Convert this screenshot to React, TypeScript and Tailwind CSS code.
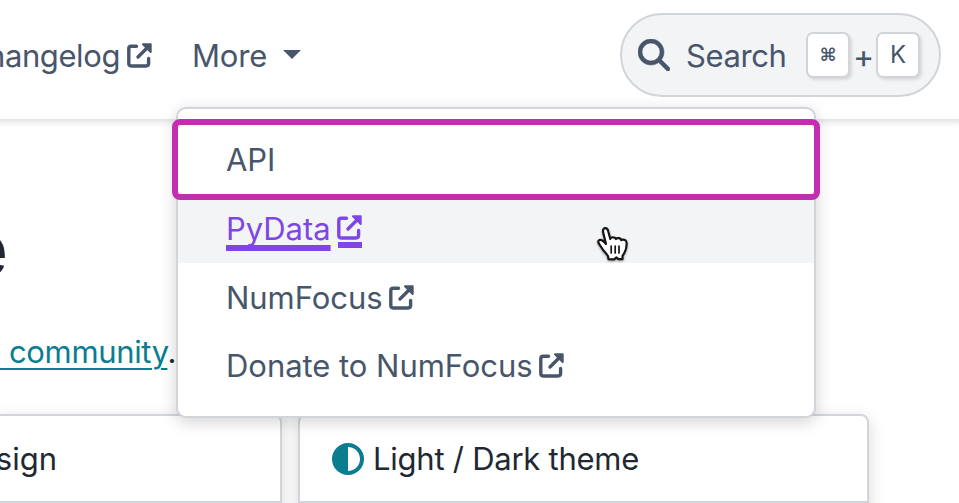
import { FaCircleHalfStroke, FaMagnifyingGlass } from "react-icons/fa6";

function ExternalIcon({ className = "" }: { className?: string }) {
  return (
    <svg className={`size-[25px] shrink-0 ${className}`} viewBox="0 0 25 25" fill="none" stroke="currentColor" strokeWidth="3.400" strokeLinecap="round">
      <path d="M9.500 3.300 H4.200 Q1.800 3.300 1.800 5.700 V20.600 Q1.800 23 4.200 23 H19 Q21.600 23 21.600 20.600 V15.500" />
      <path d="M11 14 L20 5" />
      <path d="M16 1.300 H23.700 V9 Z" fill="currentColor" strokeWidth="2" strokeLinejoin="round" />
    </svg>
  );
}

function Cursor() {
  return (
    <svg
      className="absolute left-[594px] top-[224px] h-[42px] w-[38px] drop-shadow-[0_1px_1px_rgba(0,0,0,0.4)]"
      viewBox="0 0 38 42"
      fill="#fff"
      stroke="#151515"
      strokeWidth="2.200"
      strokeLinejoin="round"
      strokeLinecap="round"
    >
      <path d="M12 20 L9.300 9 Q8.300 4.500 11 4.200 Q13.500 4 14.300 7.500 L16.300 15 Q17 13 19.300 13.300 Q21.300 13.500 21.800 15 Q23 13.800 25 14.200 Q27 14.600 27.300 16.200 Q29 15 31 16 Q33 17 32.600 20.500 Q32.500 25 30.300 29 L28.500 32 L28.500 35.200 L24.500 35.200 L22.500 33.500 L20 35.400 L14.500 35.200 L14 32 Q12 29 9.500 26.500 L5.500 20.500 Q3.300 17.500 5 16.300 Q7.500 14.800 12 20 Z" />
      <path d="M17.200 22 V29 M21.200 22 V29 M25 22 V29" strokeWidth="1.700" />
    </svg>
  );
}

function Key({ children, className }: { children: string; className: string }) {
  return (
    <kbd
      className={`flex h-[46px] w-11 items-center justify-center rounded-[7px] border-2 border-[#d1d5da] bg-white font-['Inter','DejaVu_Sans',sans-serif] shadow-[2px_2px_3px_#d8d8d8] ${className}`}
    >
      {children}
    </kbd>
  );
}

const links = ["NumFocus", "Donate to NumFocus"];

function Menu() {
  return (
    <div className="absolute left-[176px] top-[107px] z-20 h-[311px] w-[640px] rounded-[10px] border-2 border-[#d1d5da] bg-white py-4 tracking-[-0.04px] shadow-[0_4px_16px_rgba(0,0,0,0.18)]">
      <a className="relative z-10 flex h-[69px] items-center rounded-[2px] bg-white pl-12 outline-6 outline-[#c12eb0]">
        <span>API</span>
      </a>
      <a className="flex h-[69px] items-center bg-[#f3f4f5] pl-12 text-[#8045e5]">
        <span className="underline decoration-[6px] underline-offset-[5px] [text-decoration-skip-ink:none]">
          PyData
        </span>
        <span className="ml-[7px] mt-[5px] flex h-[33px] flex-col justify-between">
          <ExternalIcon className="-ml-px" />
          <span className="h-1.5 w-6 bg-[#8045e5]" />
        </span>
      </a>
      {links.map((label) => (
        <a key={label} className="flex h-[68.500px] items-center pl-12 pt-px">
          <span>{label}</span>
          <ExternalIcon className="mb-px ml-1.5" />
        </a>
      ))}
    </div>
  );
}

export default function App() {
  return (
    <div className="relative flex h-[503px] w-[959px] flex-col overflow-hidden whitespace-nowrap bg-white font-['Inter',sans-serif] text-[31px] font-[440] leading-[48px] text-[#48566b]">
      <header className="relative z-10 flex h-[119px] shrink-0 bg-white shadow-[0_-6px_8px_8px_#d8d8d8]">
        <nav className="flex h-28 items-center">
          <div className="flex w-[120px] justify-end tracking-[-0.4px]">
            <span>Changelog</span>
          </div>
          <ExternalIcon className="mb-0.5 ml-[7px]" />
          <span className="ml-10 w-[91px] tracking-[-0.2px]">More</span>
          <span className="mb-1 h-0 w-0 border-x-[9px] border-t-[9px] border-x-transparent border-t-[#48566b]" />
        </nav>
        <button className="ml-auto mr-[18px] mt-[13px] flex h-[84px] w-[321px] items-center rounded-full border-2 border-[#d1d5da] bg-[#f3f4f5] pl-4">
          <FaMagnifyingGlass className="size-8 stroke-[#48566b] stroke-8" />
          <span className="ml-4 mt-0.5 w-[120px] text-left tracking-[-0.4px]">Search</span>
          <Key className="text-[18px] font-semibold">⌘</Key>
          <span className="mt-1 w-[26px] text-center text-[32px] tracking-[-1px]">+</span>
          <Key className="text-[24px]">K</Key>
        </button>
      </header>

      <main className="flex flex-1 flex-col text-[#222832]">
        <div className="flex h-[208px] w-[176px] shrink-0 flex-col items-end">
          <h1 className="mr-[168px] mt-[79px] text-[76px] font-semibold leading-[100px]">theme</h1>
          <p className="mt-[30px] tracking-[-0.35px]">
            <a className="text-[#0a7d91] underline decoration-2 underline-offset-[5px]">the community</a>.
          </p>
        </div>
        <div className="mt-[87px] flex h-[89px] shrink-0 gap-4">
          <section className="flex h-[120px] w-[282px] flex-col rounded-tr-lg border-2 border-l-0 border-[#d1d5da] bg-white shadow-[0_4px_16px_#d8d8d8]">
            <div className="flex h-[87px] items-center border-b-2 border-[#d1d5da]">
              <div className="flex w-[57px] justify-end">
                <span>Design</span>
              </div>
            </div>
          </section>
          <section className="flex h-[120px] w-[571px] flex-col rounded-t-lg border-2 border-[#d1d5da] bg-white shadow-[0_4px_16px_#d8d8d8]">
            <div className="flex h-[87px] items-center border-b-2 border-[#d1d5da] pl-8">
              <FaCircleHalfStroke className="size-8 text-[#0a7d91]" />
              <span className="ml-[9px] tracking-[-0.25px]">Light / Dark theme</span>
            </div>
          </section>
        </div>
      </main>

      <Menu />
      <div className="pointer-events-none absolute inset-0 z-30">
        <Cursor />
      </div>
    </div>
  );
}
